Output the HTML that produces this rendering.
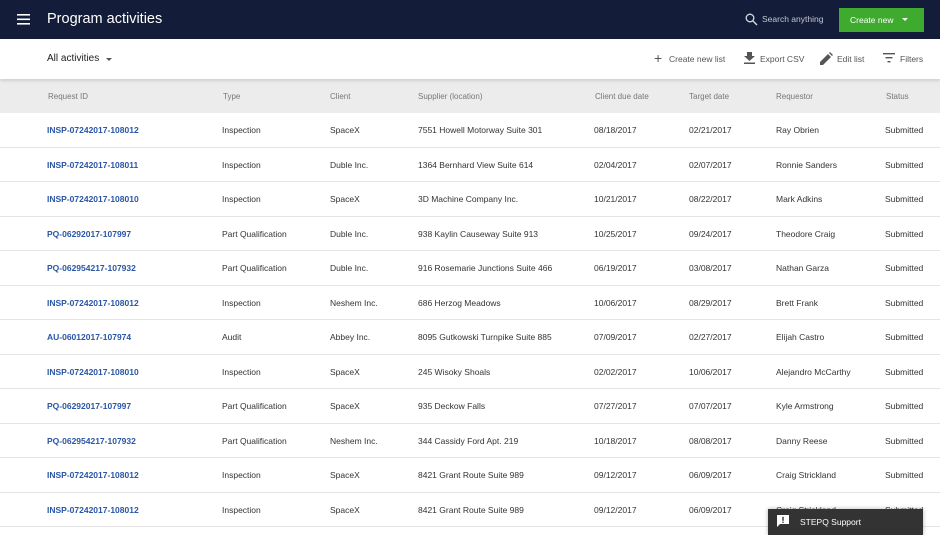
<!DOCTYPE html>
<html><head><meta charset="utf-8"><style>
*{margin:0;padding:0;box-sizing:border-box}
body{width:940px;height:535px;overflow:hidden;font-family:"Liberation Sans",sans-serif;background:#fff;position:relative;color:#333}
.hdr{position:absolute;left:0;top:0;width:940px;height:39px;background:#131c38}
.hdr .t{position:absolute;left:47px;top:11px;font-size:14.5px;color:#fff}
.tb{position:absolute;left:0;top:39px;width:940px;height:40px;background:#fff;box-shadow:0 2px 3px rgba(0,0,0,.12);z-index:2}
.th{position:absolute;left:0;top:79px;width:940px;height:34px;background:#ececec}
.c{position:absolute;font-size:8.5px;white-space:nowrap}
.row{position:absolute;left:0;width:940px;height:34.5px;border-bottom:1px solid #e4e4e4}
.id{color:#2a56a6;font-weight:bold}
.hc{color:#777;font-size:8px}
.tt{position:absolute;font-size:8.5px;color:#555;top:54px}
</style></head><body>
<div class="hdr">
<svg style="position:absolute;left:17px;top:14px" width="13" height="11"><rect y="0" width="13" height="1.6" fill="#fff"/><rect y="4.5" width="13" height="1.6" fill="#fff"/><rect y="9" width="13" height="1.6" fill="#fff"/></svg>
<div class="t">Program activities</div>
<svg style="position:absolute;left:745px;top:13px" width="13" height="13"><circle cx="5" cy="5" r="3.8" stroke="#cfd3dc" stroke-width="1.4" fill="none"/><line x1="8" y1="8" x2="12" y2="12" stroke="#cfd3dc" stroke-width="1.5"/></svg>
<div style="position:absolute;left:762px;top:14px;font-size:8.5px;color:#c4c8d2">Search anything</div>
<div style="position:absolute;left:839px;top:8px;width:85px;height:24px;background:#3fab2e;color:#fff;font-size:8.5px;padding:7px 0 0 11px">Create new<span style="position:absolute;left:63px;top:10px;border:3px solid transparent;border-top:3.5px solid #fff"></span></div>
</div>
<div class="tb">
<div style="position:absolute;left:47px;top:14px;font-size:10px;color:#222">All activities</div>
<span style="position:absolute;left:106px;top:19px;border:3px solid transparent;border-top:3px solid #555"></span>
<div style="position:absolute;left:654px;top:13px;font-size:14px;color:#555;line-height:12px">+</div>
<div class="tt" style="top:15px;left:669px">Create new list</div>
<svg style="position:absolute;left:744px;top:13px" width="11" height="12"><path d="M3 0h5v4h3L5.5 9 0 4h3z" fill="#555"/><rect y="10.5" width="11" height="1.5" fill="#555"/></svg>
<div class="tt" style="top:15px;left:760px">Export CSV</div>
<svg style="position:absolute;left:820px;top:13px" width="13" height="13"><path d="M0 13v-3L8 2l3 3-8 8z M9 1l1-1 3 3-1 1z" fill="#555"/></svg>
<div class="tt" style="top:15px;left:837px">Edit list</div>
<svg style="position:absolute;left:883px;top:14px" width="12" height="10"><rect width="12" height="1.4" fill="#555"/><rect x="2.5" y="4" width="7" height="1.4" fill="#555"/><rect x="4.5" y="8" width="3" height="1.4" fill="#555"/></svg>
<div class="tt" style="top:15px;left:900px">Filters</div>
</div>
<div class="th">
<div class="c hc" style="left:48px;top:13px">Request ID</div>
<div class="c hc" style="left:223px;top:13px">Type</div>
<div class="c hc" style="left:330px;top:13px">Client</div>
<div class="c hc" style="left:418px;top:13px">Supplier (location)</div>
<div class="c hc" style="left:595px;top:13px">Client due date</div>
<div class="c hc" style="left:689px;top:13px">Target date</div>
<div class="c hc" style="left:776px;top:13px">Requestor</div>
<div class="c hc" style="left:886px;top:13px">Status</div>
</div>
<div id="rows"></div>
<div class="row" style="top:113px"><div class="c id" style="left:47px;top:12px">INSP-07242017-108012</div><div class="c" style="left:222px;top:12px">Inspection</div><div class="c" style="left:330px;top:12px">SpaceX</div><div class="c" style="left:418px;top:12px">7551 Howell Motorway Suite 301</div><div class="c" style="left:594px;top:12px">08/18/2017</div><div class="c" style="left:689px;top:12px">02/21/2017</div><div class="c" style="left:776px;top:12px">Ray Obrien</div><div class="c" style="left:885px;top:12px">Submitted</div></div>
<div class="row" style="top:147.5px"><div class="c id" style="left:47px;top:12px">INSP-07242017-108011</div><div class="c" style="left:222px;top:12px">Inspection</div><div class="c" style="left:330px;top:12px">Duble Inc.</div><div class="c" style="left:418px;top:12px">1364 Bernhard View Suite 614</div><div class="c" style="left:594px;top:12px">02/04/2017</div><div class="c" style="left:689px;top:12px">02/07/2017</div><div class="c" style="left:776px;top:12px">Ronnie Sanders</div><div class="c" style="left:885px;top:12px">Submitted</div></div>
<div class="row" style="top:182px"><div class="c id" style="left:47px;top:12px">INSP-07242017-108010</div><div class="c" style="left:222px;top:12px">Inspection</div><div class="c" style="left:330px;top:12px">SpaceX</div><div class="c" style="left:418px;top:12px">3D Machine Company Inc.</div><div class="c" style="left:594px;top:12px">10/21/2017</div><div class="c" style="left:689px;top:12px">08/22/2017</div><div class="c" style="left:776px;top:12px">Mark Adkins</div><div class="c" style="left:885px;top:12px">Submitted</div></div>
<div class="row" style="top:216.5px"><div class="c id" style="left:47px;top:12px">PQ-06292017-107997</div><div class="c" style="left:222px;top:12px">Part Qualification</div><div class="c" style="left:330px;top:12px">Duble Inc.</div><div class="c" style="left:418px;top:12px">938 Kaylin Causeway Suite 913</div><div class="c" style="left:594px;top:12px">10/25/2017</div><div class="c" style="left:689px;top:12px">09/24/2017</div><div class="c" style="left:776px;top:12px">Theodore Craig</div><div class="c" style="left:885px;top:12px">Submitted</div></div>
<div class="row" style="top:251px"><div class="c id" style="left:47px;top:12px">PQ-062954217-107932</div><div class="c" style="left:222px;top:12px">Part Qualification</div><div class="c" style="left:330px;top:12px">Duble Inc.</div><div class="c" style="left:418px;top:12px">916 Rosemarie Junctions Suite 466</div><div class="c" style="left:594px;top:12px">06/19/2017</div><div class="c" style="left:689px;top:12px">03/08/2017</div><div class="c" style="left:776px;top:12px">Nathan Garza</div><div class="c" style="left:885px;top:12px">Submitted</div></div>
<div class="row" style="top:285.5px"><div class="c id" style="left:47px;top:12px">INSP-07242017-108012</div><div class="c" style="left:222px;top:12px">Inspection</div><div class="c" style="left:330px;top:12px">Neshem Inc.</div><div class="c" style="left:418px;top:12px">686 Herzog Meadows</div><div class="c" style="left:594px;top:12px">10/06/2017</div><div class="c" style="left:689px;top:12px">08/29/2017</div><div class="c" style="left:776px;top:12px">Brett Frank</div><div class="c" style="left:885px;top:12px">Submitted</div></div>
<div class="row" style="top:320px"><div class="c id" style="left:47px;top:12px">AU-06012017-107974</div><div class="c" style="left:222px;top:12px">Audit</div><div class="c" style="left:330px;top:12px">Abbey Inc.</div><div class="c" style="left:418px;top:12px">8095 Gutkowski Turnpike Suite 885</div><div class="c" style="left:594px;top:12px">07/09/2017</div><div class="c" style="left:689px;top:12px">02/27/2017</div><div class="c" style="left:776px;top:12px">Elijah Castro</div><div class="c" style="left:885px;top:12px">Submitted</div></div>
<div class="row" style="top:354.5px"><div class="c id" style="left:47px;top:12px">INSP-07242017-108010</div><div class="c" style="left:222px;top:12px">Inspection</div><div class="c" style="left:330px;top:12px">SpaceX</div><div class="c" style="left:418px;top:12px">245 Wisoky Shoals</div><div class="c" style="left:594px;top:12px">02/02/2017</div><div class="c" style="left:689px;top:12px">10/06/2017</div><div class="c" style="left:776px;top:12px">Alejandro McCarthy</div><div class="c" style="left:885px;top:12px">Submitted</div></div>
<div class="row" style="top:389px"><div class="c id" style="left:47px;top:12px">PQ-06292017-107997</div><div class="c" style="left:222px;top:12px">Part Qualification</div><div class="c" style="left:330px;top:12px">SpaceX</div><div class="c" style="left:418px;top:12px">935 Deckow Falls</div><div class="c" style="left:594px;top:12px">07/27/2017</div><div class="c" style="left:689px;top:12px">07/07/2017</div><div class="c" style="left:776px;top:12px">Kyle Armstrong</div><div class="c" style="left:885px;top:12px">Submitted</div></div>
<div class="row" style="top:423.5px"><div class="c id" style="left:47px;top:12px">PQ-062954217-107932</div><div class="c" style="left:222px;top:12px">Part Qualification</div><div class="c" style="left:330px;top:12px">Neshem Inc.</div><div class="c" style="left:418px;top:12px">344 Cassidy Ford Apt. 219</div><div class="c" style="left:594px;top:12px">10/18/2017</div><div class="c" style="left:689px;top:12px">08/08/2017</div><div class="c" style="left:776px;top:12px">Danny Reese</div><div class="c" style="left:885px;top:12px">Submitted</div></div>
<div class="row" style="top:458px"><div class="c id" style="left:47px;top:12px">INSP-07242017-108012</div><div class="c" style="left:222px;top:12px">Inspection</div><div class="c" style="left:330px;top:12px">SpaceX</div><div class="c" style="left:418px;top:12px">8421 Grant Route Suite 989</div><div class="c" style="left:594px;top:12px">09/12/2017</div><div class="c" style="left:689px;top:12px">06/09/2017</div><div class="c" style="left:776px;top:12px">Craig Strickland</div><div class="c" style="left:885px;top:12px">Submitted</div></div>
<div class="row" style="top:492.5px"><div class="c id" style="left:47px;top:12px">INSP-07242017-108012</div><div class="c" style="left:222px;top:12px">Inspection</div><div class="c" style="left:330px;top:12px">SpaceX</div><div class="c" style="left:418px;top:12px">8421 Grant Route Suite 989</div><div class="c" style="left:594px;top:12px">09/12/2017</div><div class="c" style="left:689px;top:12px">06/09/2017</div><div class="c" style="left:776px;top:12px">Craig Strickland</div><div class="c" style="left:885px;top:12px">Submitted</div></div>
<div style="position:absolute;left:768px;top:509px;width:155px;height:26px;background:#333;box-shadow:0 0 4px rgba(0,0,0,.3)">
<svg style="position:absolute;left:9px;top:6px" width="12" height="12"><path d="M0 0h12v9H3l-3 3z" fill="#fff"/><rect x="5.3" y="1.8" width="1.4" height="4" fill="#333"/><rect x="5.3" y="6.6" width="1.4" height="1.3" fill="#333"/></svg>
<div style="position:absolute;left:32px;top:8px;font-size:8.5px;color:#fff">STEPQ Support</div>
</div>
</body></html>
